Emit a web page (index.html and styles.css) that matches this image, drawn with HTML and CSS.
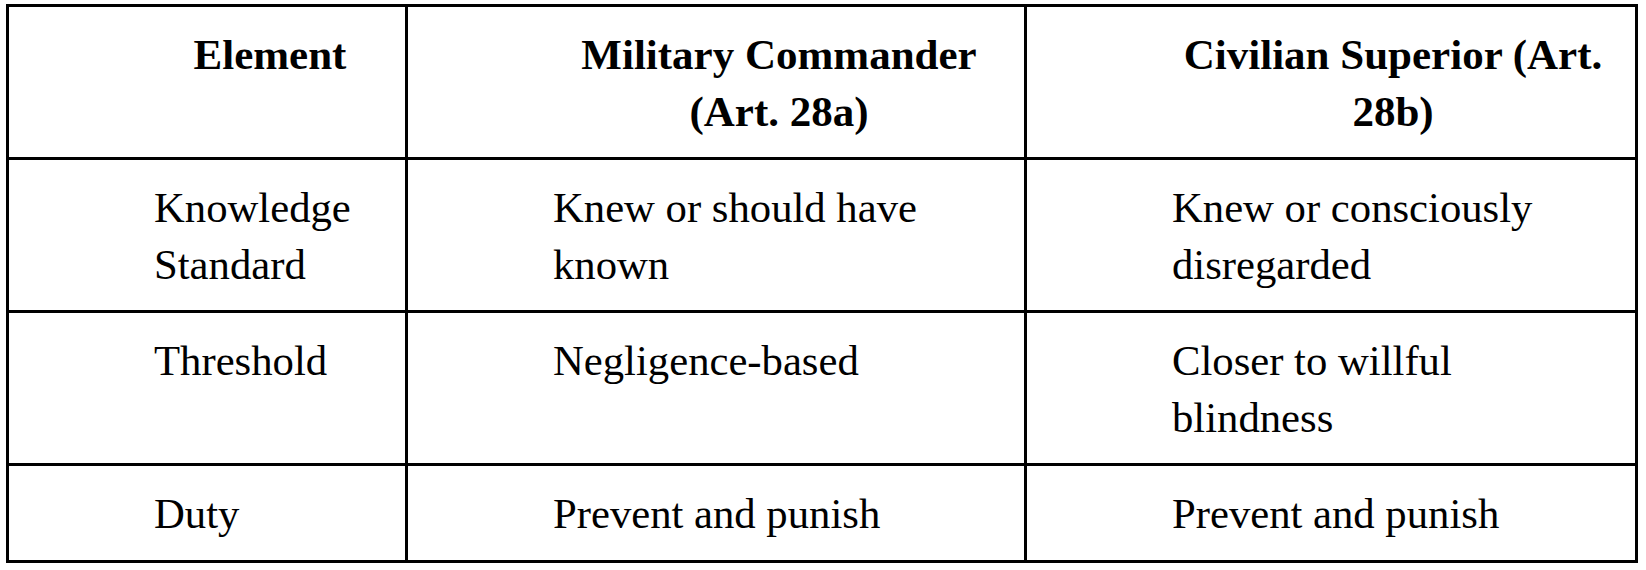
FILE: index.html
```html
<!DOCTYPE html>
<html lang="en">
<head>
<meta charset="utf-8">
<title>Superior Responsibility Comparison</title>
<link rel="stylesheet" href="styles.css">
</head>
<body>
<table class="cmp">
  <thead>
    <tr class="row-head">
      <th class="c1">Element</th>
      <th class="c2">Military Commander (Art. 28a)</th>
      <th class="c3">Civilian Superior (Art. 28b)</th>
    </tr>
  </thead>
  <tbody>
    <tr class="row-tall">
      <td class="c1">Knowledge Standard</td>
      <td class="c2">Knew or should have known</td>
      <td class="c3">Knew or consciously disregarded</td>
    </tr>
    <tr class="row-mid">
      <td class="c1">Threshold</td>
      <td class="c2">Negligence-based</td>
      <td class="c3">Closer to willful blindness</td>
    </tr>
    <tr class="row-short">
      <td class="c1">Duty</td>
      <td class="c2">Prevent and punish</td>
      <td class="c3">Prevent and punish</td>
    </tr>
  </tbody>
</table>
</body>
</html>
```

FILE: styles.css
```css
html, body {
  margin: 0;
  padding: 0;
  background: #ffffff;
}

body {
  padding: 4px 0 0 6px;
  font-family: "Liberation Serif", "Times New Roman", serif;
  color: #000000;
}

.cmp {
  box-sizing: border-box;
  width: 1632px;
  table-layout: fixed;
  border-collapse: separate;
  border-spacing: 0;
  border-left: 3px solid #000;
  border-top: 3px solid #000;
  font-size: 42.7px;
  line-height: 57px;
}

.cmp th,
.cmp td {
  box-sizing: border-box;
  border-right: 3px solid #000;
  border-bottom: 3px solid #000;
  padding: 19px 19px 17px 145px;
  vertical-align: top;
}

.cmp th {
  font-size: 43px;
  font-weight: bold;
  text-align: center;
}

.cmp td {
  font-weight: normal;
  text-align: left;
}

.cmp .c1 { width: 399px; }
.cmp .c2 { width: 619px; }
.cmp .c3 { width: 611px; padding-right: 21px; }

.row-head th { height: 153px; }
.row-tall td { height: 153px; }
.row-mid td { height: 152px; }
.row-short td { height: 97px; }
```
